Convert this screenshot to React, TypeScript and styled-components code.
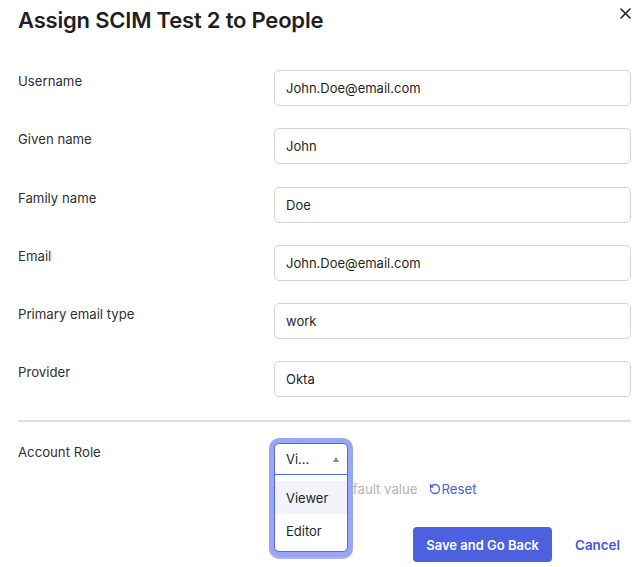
import React from "react";
import styled, { createGlobalStyle } from "styled-components";
import { RotateCcw } from "lucide-react";

const Global = createGlobalStyle`
  html, body { margin: 0; padding: 0; background: #fff; }
  body { font-family: Inter, "Noto Sans", sans-serif; color: #2a2a2e; -webkit-font-smoothing: antialiased; }
  * { box-sizing: border-box; }
`;

const Dialog = styled.div`
  width: 640px;
  height: 567px;
  padding: 6px 9px 0 18px;
  position: relative;
  overflow: hidden;
`;

const Header = styled.div`
  display: flex;
  justify-content: space-between;
  align-items: flex-start;
`;

const Title = styled.h1`
  margin: 0;
  font-size: 22px;
  line-height: 28px;
  font-weight: 600;
  color: #1f1f23;
  letter-spacing: -0.2px;
`;

const Close = styled.button`
  border: 0;
  background: none;
  padding: 0;
  width: 14px;
  height: 14px;
  margin-right: -1px;
  display: flex;
  align-items: center;
  justify-content: center;
  cursor: pointer;
`;

const Form = styled.div`
  margin-top: 36px;
  display: flex;
  flex-direction: column;
  gap: 22.3px;
`;

const Row = styled.div`
  display: grid;
  grid-template-columns: 256px 1fr;
  align-items: start;
`;

const Label = styled.div`
  font-size: 13.2px;
  line-height: 20px;
  padding-top: 1px;
  color: #2f2f33;
`;

const Input = styled.div`
  height: 36px;
  border: 1px solid #d3d3d8;
  border-radius: 5px;
  padding: 0 11px;
  display: flex;
  align-items: center;
  font-size: 13px;
  color: #1f1f23;
`;

const Divider = styled.hr`
  border: 0;
  height: 2px;
  background: #dcdce1;
  margin: 23px 0 19px;
`;

const Field = styled.div`
  display: flex;
  flex-direction: column;
`;

const SelectSlot = styled.div`
  position: relative;
  width: 74px;
  height: 34px;
  margin-top: 2px;
`;

const Panel = styled.div`
  position: absolute;
  top: 0;
  left: 0;
  width: 74px;
  background: #fff;
  border: 1.5px solid #5468e2;
  border-radius: 5px;
  box-shadow: 0 0 0 5px #98a6f3, 0 2px 0 5px #a8b3f4;
  z-index: 2;
  overflow: hidden;
`;

const SelectHead = styled.div`
  height: 31px;
  display: flex;
  align-items: center;
  justify-content: space-between;
  padding: 0 8px 0 11px;
  font-size: 13px;
  color: #1f1f23;
  border-bottom: 1px solid #5468e2;
`;

const Caret = styled.span`
  width: 0;
  height: 0;
  border-left: 3.5px solid transparent;
  border-right: 3.5px solid transparent;
  border-bottom: 5px solid #8a8a90;
`;

const List = styled.div`
  padding: 6px 0 4px;
`;

const Option = styled.div<{ $active?: boolean }>`
  height: 33px;
  display: flex;
  align-items: center;
  padding: 0 11px;
  font-size: 13px;
  color: #1f1f23;
  background: ${(p) => (p.$active ? "#f2f3fb" : "#fff")};
`;

const Hint = styled.div`
  margin-top: 2px;
  display: flex;
  align-items: center;
  gap: 11px;
  height: 20px;
  font-size: 13.2px;
`;

const HintText = styled.span`
  color: #b3b3ba;
`;

const ResetLink = styled.span`
  display: inline-flex;
  align-items: center;
  gap: 1px;
  color: #4660de;
`;

const Footer = styled.div`
  margin-top: 28px;
  display: flex;
  justify-content: flex-end;
  align-items: center;
  gap: 13px;
`;

const Primary = styled.button`
  height: 35px;
  padding: 0 13px;
  border: 0;
  border-radius: 4px;
  background: #4b61df;
  color: #fff;
  font-family: inherit;
  font-size: 13px;
  font-weight: 600;
`;

const Ghost = styled.button`
  height: 35px;
  padding: 0 11px 0 10px;
  border: 0;
  background: none;
  color: #3f58db;
  font-family: inherit;
  font-size: 13.4px;
  font-weight: 600;
`;

const fields: [string, string][] = [
  ["Username", "John.Doe@email.com"],
  ["Given name", "John"],
  ["Family name", "Doe"],
  ["Email", "John.Doe@email.com"],
  ["Primary email type", "work"],
  ["Provider", "Okta"],
];

export default function App() {
  return (
    <>
      <Global />
      <Dialog>
        <Header>
          <Title>Assign SCIM Test 2 to People</Title>
          <Close aria-label="Close">
            <svg width="11" height="11" viewBox="0 0 11 11">
              <path d="M1 1 L10 10 M10 1 L1 10" stroke="#222" strokeWidth="1.6" strokeLinecap="round" />
            </svg>
          </Close>
        </Header>
        <Form>
          {fields.map(([l, v]) => (
            <Row key={l}>
              <Label>{l}</Label>
              <Input>{v}</Input>
            </Row>
          ))}
        </Form>
        <Divider />
        <Row>
          <Label>Account Role</Label>
          <Field>
            <SelectSlot>
              <Panel>
                <SelectHead>
                  <span>Vi...</span>
                  <Caret />
                </SelectHead>
                <List>
                  <Option $active>Viewer</Option>
                  <Option>Editor</Option>
                </List>
              </Panel>
            </SelectSlot>
            <Hint>
              <HintText>Using the default value</HintText>
              <ResetLink>
                <RotateCcw size={12} strokeWidth={2.6} />
                Reset
              </ResetLink>
            </Hint>
          </Field>
        </Row>
        <Footer>
          <Primary>Save and Go Back</Primary>
          <Ghost>Cancel</Ghost>
        </Footer>
      </Dialog>
    </>
  );
}
